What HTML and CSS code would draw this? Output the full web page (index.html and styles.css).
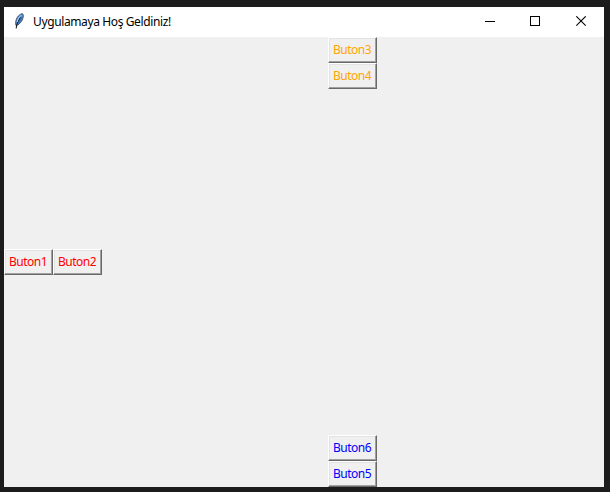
FILE: index.html
```html
<!DOCTYPE html>
<html lang="tr">
<head>
<meta charset="utf-8">
<title>Uygulamaya Hoş Geldiniz!</title>
<link rel="stylesheet" href="styles.css">
</head>
<body>
<div class="window">
  <header class="titlebar">
    <svg class="feather" width="16" height="16" viewBox="0 0 16 16">
      <path d="M4 12.500C3 8.500 4.600 4 7.500 2C9.500 .4 11.300 .1 11.300 2.500C11.300 6.500 8.500 10.500 5 12.500Z" fill="#5c9ce2" stroke="#2b3036" stroke-width=".8"/>
      <path d="M10.500 2.500C10.600 6 8.500 9.500 5.800 11.500L7 7.500Z" fill="#3d74b8"/>
      <path d="M4.200 15.500C4.200 12 6 8 8.500 4.500" fill="none" stroke="#111" stroke-width="1"/>
      <path d="M5.300 9C5.500 6.500 7 4 9 2.300" fill="none" stroke="#a8d4ff" stroke-width="1"/>
    </svg>
    <h1 class="title">Uygulamaya Hoş Geldiniz!</h1>
    <div class="controls">
      <div class="control"><svg width="11" height="11" shape-rendering="crispEdges"><path d="M0 5.500H10" stroke="#000"/></svg></div>
      <div class="control"><svg width="11" height="11" shape-rendering="crispEdges"><path d="M.5 .5H9.500V9.500H.5Z" fill="none" stroke="#000"/></svg></div>
      <div class="control"><svg width="11" height="11"><path d="M.3 .3L9.700 9.700M9.700 .3L.3 9.700" stroke="#000" stroke-width="1.100"/></svg></div>
    </div>
  </header>
  <main class="content">
    <div class="side">
      <button class="btn red">Buton1</button>
      <button class="btn red">Buton2</button>
    </div>
    <div class="stack">
      <button class="btn orange">Buton3</button>
      <button class="btn orange">Buton4</button>
      <button class="btn blue push">Buton6</button>
      <button class="btn blue">Buton5</button>
    </div>
  </main>
</div>
</body>
</html>
```
FILE: styles.css
```css
* { box-sizing: border-box; }
body {
  margin: 0;
  height: 492px;
  padding: 7px 6px 5px 4px;
  background: #1c1c1c;
  font-family: "Noto Sans", "Open Sans", sans-serif;
  font-size: 12px;
  overflow: hidden;
}
.window { width: 600px; height: 480px; display: flex; flex-direction: column; }
.titlebar {
  height: 30px;
  display: flex;
  align-items: center;
  padding-left: 8px;
  background: #fff;
}
.feather { display: block; margin: 0 5px 2px 0; }
.title {
  margin: 0;
  font-size: 12px;
  font-weight: 400;
  line-height: 16px;
  letter-spacing: -0.38px;
  white-space: nowrap;
  color: #000;
}
.controls { display: flex; margin-left: auto; }
.control {
  width: 45.500px;
  height: 30px;
  padding-bottom: 1px;
  display: flex;
  align-items: center;
  justify-content: center;
}
.control svg { display: block; }
.content { flex: 1; display: flex; background: #f0f0f0; }
.side { display: flex; align-items: center; }
.stack { flex: 1; display: flex; flex-direction: column; align-items: flex-start; padding-left: 226px; }
.btn {
  width: 49px;
  height: 26px;
  padding: 0 1px 0 0;
  border: 1px solid;
  border-color: #fff #696969 #696969 #fff;
  box-shadow: inset -1px -1px #a0a0a0, inset 1px 1px #e3e3e3;
  background: #f0f0f0;
  font: 12px/16px "Noto Sans", "Open Sans", sans-serif;
  letter-spacing: -0.5px;
  white-space: nowrap;
}
.push { margin-top: auto; }
.red { color: #ff0000; }
.orange { color: #ffa500; }
.blue { color: #0000ff; }
```
